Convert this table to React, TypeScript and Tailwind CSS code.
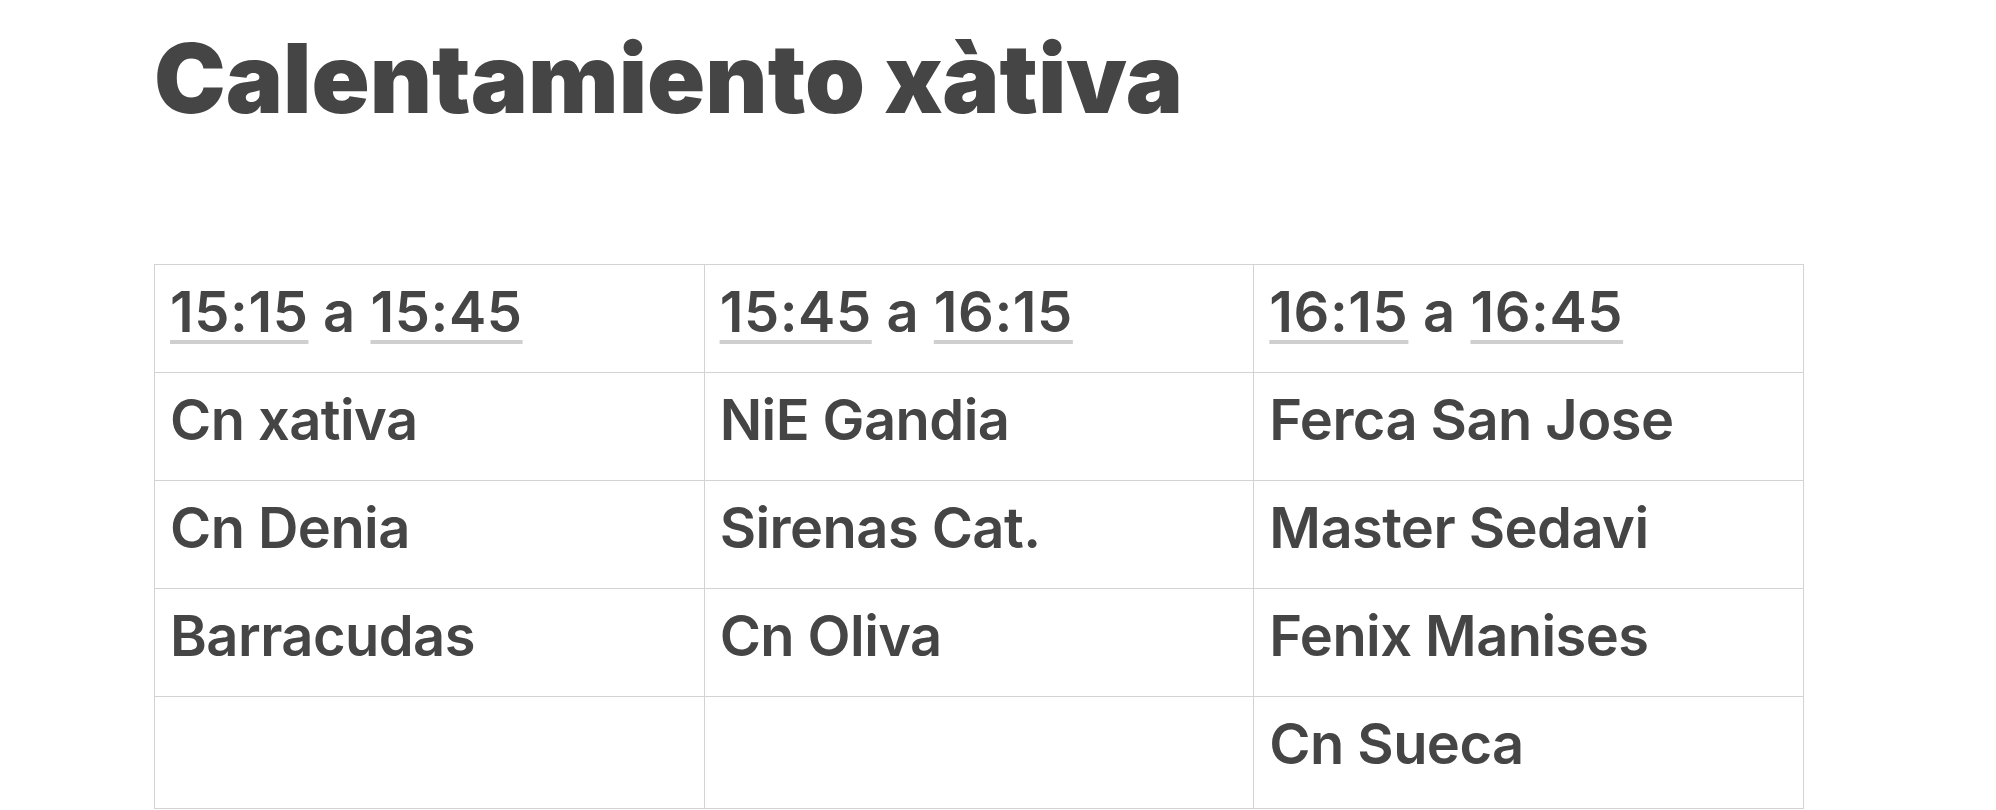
const rows: string[][] = [
  ["Cn xativa", "NiE Gandia", "Ferca San Jose"],
  ["Cn Denia", "Sirenas Cat.", "Master Sedavi"],
  ["Barracudas", "Cn Oliva", "Fenix Manises"],
  ["", "", "Cn Sueca"],
]

const slots = [
  ["15:15", "15:45"],
  ["15:45", "16:15"],
  ["16:15", "16:45"],
]

function Time({ t }: { t: string }) {
  return (
    <span className="underline decoration-[#cfcfcf] decoration-[4px] underline-offset-[8px]">{t}</span>
  )
}

export default function App() {
  return (
    <div className="min-h-screen bg-white text-[#454545] pl-[154px]" style={{ fontFamily: "Inter, 'Noto Sans', sans-serif" }}>
      <h1 className="text-[96px] font-black leading-none pt-[30px]">Calentamiento xàtiva</h1>

      <table className="mt-[138px] w-[1650px] table-fixed border-collapse text-[56px] font-semibold leading-[1.2] tracking-[-0.01em]">
        <tbody>
          <tr className="h-[108px]">
            {slots.map(([a, b], i) => (
              <td key={i} className="border border-[#d3d3d3] align-top px-[15px] pt-[14px] tracking-[0.01em]">
                <Time t={a} /> a <Time t={b} />
              </td>
            ))}
          </tr>
          {rows.map((r, i) => (
            <tr key={i} className={i === rows.length - 1 ? "h-[112px]" : "h-[108px]"}>
              {r.map((c, j) => (
                <td key={j} className="border border-[#d3d3d3] align-top px-[15px] pt-[14px]">{c}</td>
              ))}
            </tr>
          ))}
        </tbody>
      </table>
    </div>
  )
}
